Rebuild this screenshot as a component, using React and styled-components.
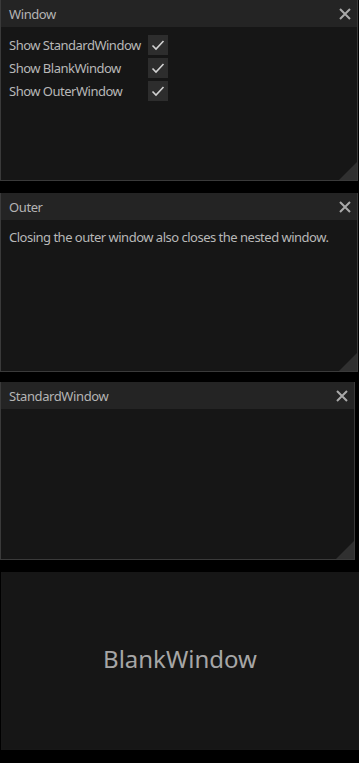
import React from 'react';
import styled, { createGlobalStyle } from 'styled-components';

const GlobalStyle = createGlobalStyle`
  html, body {
    margin: 0;
    padding: 0;
    background: #000;
  }
  body {
    font-family: "Noto Sans", "Liberation Sans", sans-serif;
    -webkit-font-smoothing: antialiased;
  }
`;

const Desktop = styled.div`
  display: flex;
  flex-direction: column;
  width: 359px;
  height: 763px;
  background: #000;
  overflow: hidden;
`;

const Frame = styled.div`
  position: relative;
  display: flex;
  flex-direction: column;
  box-sizing: border-box;
  width: ${p => p.$width}px;
  height: ${p => p.$height}px;
  margin-top: ${p => p.$gap || 0}px;
  margin-left: ${p => p.$left || 0}px;
  background: #161616;
  border: 1px solid ${p => (p.$bare ? '#171717' : '#3a3a3a')};
  border-top: none;
  flex-shrink: 0;
`;

const TitleBar = styled.div`
  display: flex;
  align-items: center;
  justify-content: space-between;
  height: 27px;
  padding: 0 4px 0 8px;
  background: #242424;
  color: #b4b4b4;
  font-size: 13px;
  letter-spacing: -0.4px;
  flex-shrink: 0;
`;

const CloseButton = styled.button`
  display: flex;
  align-items: center;
  justify-content: center;
  width: 16px;
  height: 16px;
  padding: 0;
  border: none;
  background: transparent;
  cursor: pointer;
`;

const Body = styled.div`
  flex: 1;
  padding: 8px 8px;
  color: #b8b8b8;
  font-size: 13px;
  letter-spacing: -0.5px;
  white-space: nowrap;
`;

const Centered = styled.div`
  flex: 1;
  display: flex;
  align-items: center;
  justify-content: center;
  color: #a6a6a6;
  font-size: 24px;
  padding-bottom: 5px;
`;

const Options = styled.div`
  display: grid;
  grid-template-columns: 139px 20px;
  row-gap: 3px;
  align-items: center;
`;

const CheckBox = styled.span`
  display: flex;
  align-items: center;
  justify-content: center;
  width: 20px;
  height: 20px;
  background: #2d2d2d;
`;

const Grip = styled.div`
  position: absolute;
  right: 0;
  bottom: 0;
  width: 18px;
  height: 18px;
  background: #303030;
  clip-path: polygon(100% 0, 100% 100%, 0 100%);
`;

const CloseIcon = () => (
  <svg width="12" height="12" viewBox="0 0 12 12">
    <path d="M1 1 L11 11 M11 1 L1 11" stroke="#a9a9a9" strokeWidth="2" />
  </svg>
);

const CheckIcon = () => (
  <svg width="20" height="20" viewBox="0 0 20 20">
    <path d="M4.5 10.5 L8 14 L15.5 6" stroke="#d2d2d2" strokeWidth="1.6" fill="none" />
  </svg>
);

function Window({ title, width, height, gap, children }) {
  return (
    <Frame $width={width} $height={height} $gap={gap}>
      <TitleBar>
        <span>{title}</span>
        <CloseButton aria-label="Close">
          <CloseIcon />
        </CloseButton>
      </TitleBar>
      <Body>{children}</Body>
      <Grip />
    </Frame>
  );
}

const options = ['Show StandardWindow', 'Show BlankWindow', 'Show OuterWindow'];

export default function App() {
  return (
    <>
      <GlobalStyle />
      <Desktop>
        <Window title="Window" width={358} height={181}>
          <Options>
            {options.map(o => (
              <React.Fragment key={o}>
                <span>{o}</span>
                <CheckBox>
                  <CheckIcon />
                </CheckBox>
              </React.Fragment>
            ))}
          </Options>
        </Window>
        <Window title="Outer" width={358} height={179} gap={12}>
          Closing the outer window also closes the nested window.
        </Window>
        <Window title="StandardWindow" width={355} height={178} gap={10} />
        <Frame $width={358} $height={178} $gap={12} $left={1} $bare>
          <Centered>BlankWindow</Centered>
        </Frame>
      </Desktop>
    </>
  );
}
